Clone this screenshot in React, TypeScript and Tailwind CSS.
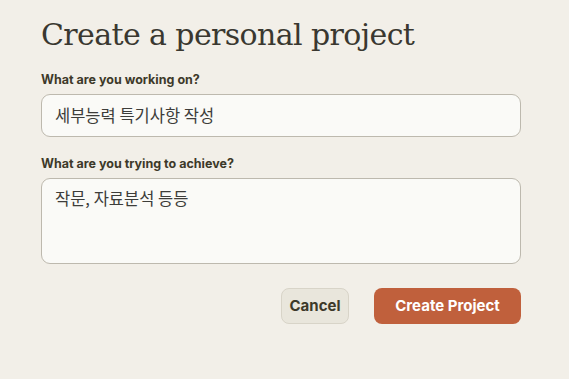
export default function App() {
  return (
    <div className="min-h-[379px] w-full bg-[#f2efe8] text-[#3d3929]">
      <div className="ml-[41px] flex w-[480px] flex-col pt-[16px]">
        <h1 className="font-['DejaVu_Serif','Liberation_Serif',serif] text-[30px] leading-[38px] tracking-[-0.6px] text-[#3a3830]">
          Create a personal project
        </h1>

        <label className="mt-[18px] font-['Inter','Noto_Sans',sans-serif] text-[12.5px] font-bold leading-[16px] text-[#3d3929]">
          What are you working on?
        </label>
        <div className="mt-[6px] flex h-[43px] items-center rounded-[9px] border border-[#bdb9ae] bg-[#fafaf7] px-[13px] font-['Noto_Sans_CJK_KR','Noto_Sans',sans-serif] text-[16.5px] text-[#3d3d3a]">
          세부능력 특기사항 작성
        </div>

        <label className="mt-[19px] font-['Inter','Noto_Sans',sans-serif] text-[12.5px] font-bold leading-[16px] text-[#3d3929]">
          What are you trying to achieve?
        </label>
        <div className="mt-[6px] h-[86px] rounded-[9px] border border-[#bdb9ae] bg-[#fafaf7] px-[13px] pt-[7px] font-['Noto_Sans_CJK_KR','Noto_Sans',sans-serif] text-[16.5px] leading-[24px] text-[#3d3d3a]">
          작문, 자료분석 등등
        </div>

        <div className="mt-[24px] flex justify-end gap-[25px] font-['Inter','Noto_Sans',sans-serif]">
          <button className="h-[36px] w-[68px] rounded-[8px] border border-[#d8d4c8] bg-[#e9e6dc] text-[15px] font-bold text-[#3d3929]">
            Cancel
          </button>
          <button className="h-[36px] w-[147px] rounded-[8px] bg-[#c0603c] text-[15px] font-bold text-white">
            Create Project
          </button>
        </div>
      </div>
    </div>
  );
}
